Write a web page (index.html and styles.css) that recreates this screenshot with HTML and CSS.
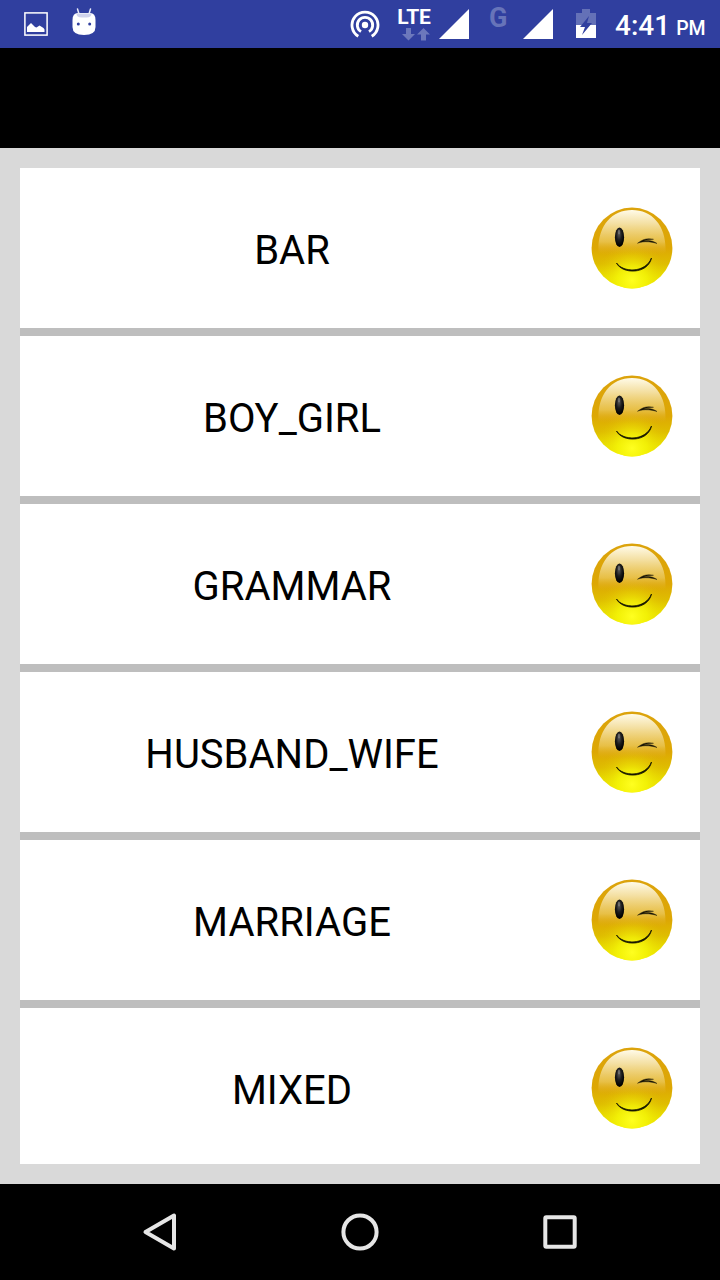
FILE: index.html
```
<!DOCTYPE html>
<html lang="en">
<head>
<meta charset="utf-8">
<title>Categories</title>
<link rel="stylesheet" href="styles.css">
</head>
<body>
<svg class="defs" width="0" height="0" aria-hidden="true">
  <defs>
    <linearGradient id="rim" x1="0" y1="0" x2="0" y2="1">
      <stop offset="0" stop-color="#dca30c"/><stop offset=".5" stop-color="#dda704"/><stop offset=".7" stop-color="#dfbe00"/><stop offset=".87" stop-color="#ebe600"/><stop offset="1" stop-color="#f4ec00"/>
    </linearGradient>
    <radialGradient id="glow" cx=".5" cy=".9" r=".46">
      <stop offset="0" stop-color="#ffff20"/><stop offset=".4" stop-color="#f4f408" stop-opacity=".75"/><stop offset="1" stop-color="#e0c000" stop-opacity="0"/>
    </radialGradient>
    <linearGradient id="shine" x1="0" y1="0" x2="0" y2="1">
      <stop offset="0" stop-color="#fffbe9"/><stop offset=".3" stop-color="#f6e5b0" stop-opacity=".92"/><stop offset=".7" stop-color="#ecca62" stop-opacity=".7"/><stop offset="1" stop-color="#dfab10" stop-opacity="0"/>
    </linearGradient>
    <radialGradient id="eye" cx=".45" cy=".35" r=".6">
      <stop offset="0" stop-color="#555"/><stop offset=".5" stop-color="#1c1c1c"/><stop offset="1" stop-color="#000"/>
    </radialGradient>
    <symbol id="wink" viewBox="0 0 82 82">
      <circle cx="41" cy="41" r="40.4" fill="url(#rim)"/>
      <circle cx="41" cy="41" r="40.4" fill="url(#glow)"/>
      <path d="M7.500 46C6 20 20 3 41 3s35 17 33.500 43C66 50 56 48 41 48S16 50 7.500 46Z" fill="url(#shine)"/>
      <ellipse cx="28.500" cy="30.300" rx="4.600" ry="9.800" fill="url(#eye)"/>
      <ellipse cx="28" cy="25" rx="1.200" ry="2.500" fill="#888" opacity=".6"/>
      <path d="M46.500 36.300C52 31.800 57 31 62.500 32.300C58 32.400 55 33 52.800 34.200C57 32.800 62 33.600 66 36.500C60.500 34.700 55 34.500 51.500 35C50 35.100 48 35.600 46.500 36.300Z" fill="#171306" stroke="#171306" stroke-width=".4"/>
      <path d="M25.500 56C32 65.500 54 66.500 60.500 51C57 67.500 31 67.500 25.500 56Z" fill="#151500" stroke="#151500" stroke-width=".8" stroke-linejoin="round"/>
    </symbol>
  </defs>
</svg>
<div class="screen">
  <header class="status">
    <svg class="picture" width="24" height="24" viewBox="0 0 24 24"><rect x=".9" y=".9" width="22.200" height="22.200" fill="none" stroke="#fff" stroke-width="1.500"/><path d="M3 20v-5l2-2 2-2 4 4 1.500.5 3-2 4 2.500 1 1.500v2.500z" fill="#fff"/></svg>
    <svg class="droid" width="24" height="28" viewBox="0 0 24 28"><path d="M5.500 1l1.500 5M18.500 1l-1.500 5" stroke="#e9ebfa" stroke-width="1.500" stroke-linecap="round"/><path d="M.5 12Q.5 5 6 5H18Q23.500 5 23.500 12V19Q23.500 27 12 27T.5 19Z" fill="#fff"/><path d="M4.500 5.500h15q0 4-5 4h-5q-5 0-5-4z" fill="#d0d3ec"/><circle cx="6.300" cy="16" r="1.500" fill="#303f9f"/><circle cx="17.700" cy="16" r="1.500" fill="#303f9f"/></svg>
    <svg class="hotspot" width="30" height="30" viewBox="0 0 30 30" fill="none" stroke="#fff" stroke-width="2.800"><path d="M8.300 26.200A13 13 0 1 1 21.700 26.200"/><path d="M11 21.600A7.700 7.700 0 1 1 19 21.600"/><circle cx="15" cy="15" r="3.200" fill="#fff" stroke="none"/></svg>
    <div class="lte">
      <span class="lte-text">LTE</span>
      <svg class="arrows" width="30" height="13" viewBox="0 0 30 13"><path d="M5 0h5v6h4l-6.500 6.500-6.500-6.500h4zM20 12.500h5v-6h4L22.500 0 16 6.500h4z" fill="#6c78bc"/></svg>
    </div>
    <svg class="signal-a" width="30" height="30"><path d="M30 0V30H0Z" fill="#fff"/></svg>
    <span class="network">G</span>
    <svg class="signal-b" width="30" height="30"><path d="M30 0V30H0Z" fill="#fff"/></svg>
    <svg class="battery" width="20" height="30" viewBox="0 0 20 30"><path d="M0 4h6V0h8v4h6v12H0z" fill="#6471b7"/><path d="M0 16h20v13H0z" fill="#fff"/><path d="M13 7L4 18h5l-3 8 10-12h-5z" fill="#303f9f"/></svg>
    <span class="time">4:41<span class="period">PM</span></span>
  </header>
  <div class="banner"></div>
  <main class="content">
    <ul class="list">
      <li class="row"><span class="label">BAR</span><span class="thumb"><svg width="82" height="82"><use href="#wink"/></svg></span></li>
      <li class="row"><span class="label">BOY_GIRL</span><span class="thumb"><svg width="82" height="82"><use href="#wink"/></svg></span></li>
      <li class="row"><span class="label">GRAMMAR</span><span class="thumb"><svg width="82" height="82"><use href="#wink"/></svg></span></li>
      <li class="row"><span class="label">HUSBAND_WIFE</span><span class="thumb"><svg width="82" height="82"><use href="#wink"/></svg></span></li>
      <li class="row"><span class="label">MARRIAGE</span><span class="thumb"><svg width="82" height="82"><use href="#wink"/></svg></span></li>
      <li class="row"><span class="label">MIXED</span><span class="thumb"><svg width="82" height="82"><use href="#wink"/></svg></span></li>
    </ul>
  </main>
  <nav class="navbar">
    <svg width="40" height="40" viewBox="0 0 40 40"><path d="M34 3.500V36.500L5.500 20Z"/></svg>
    <svg width="40" height="40" viewBox="0 0 40 40"><circle cx="20" cy="20" r="16.600"/></svg>
    <svg width="40" height="40" viewBox="0 0 40 40"><rect x="5.300" y="5.300" width="29.400" height="29.400" rx="1"/></svg>
  </nav>
</div>
</body>
</html>
```
FILE: styles.css
```
body {
  margin: 0;
  font-family: Roboto, "Liberation Sans", sans-serif;
}

.defs {
  display: block;
}

.screen {
  display: flex;
  flex-direction: column;
  width: 720px;
  height: 1280px;
  overflow: hidden;
  background: #000;
}

.status {
  display: flex;
  align-items: flex-start;
  flex: none;
  box-sizing: border-box;
  height: 48px;
  padding-left: 24px;
  background: #303f9f;
  color: #fff;
}

.status svg {
  flex: none;
}

.picture {
  margin-top: 12px;
}

.droid {
  margin: 8px 0 0 24px;
}

.hotspot {
  margin: 10px 0 0 254px;
}

.lte {
  display: flex;
  flex-direction: column;
  align-items: center;
  width: 38px;
  margin: 5px 0 0 15px;
}

.lte-text {
  font-size: 21px;
  font-weight: 700;
  line-height: 25px;
  letter-spacing: -0.2px;
}

.arrows {
  margin: -2px 0 0 4px;
}

.signal-a {
  margin: 9px 0 0 6px;
}

.network {
  width: 18px;
  margin: 2px 0 0 20px;
  font-size: 27px;
  font-weight: 700;
  line-height: 32px;
  color: #6774b9;
}

.signal-b {
  margin: 9px 0 0 16px;
}

.battery {
  margin: 9px 0 0 23px;
}

.time {
  margin-left: 19px;
  font-size: 28px;
  font-weight: 500;
  line-height: 51px;
  white-space: nowrap;
}

.period {
  margin-left: 6px;
  font-size: 19.5px;
}

.banner {
  flex: none;
  height: 100px;
}

.content {
  flex: none;
  box-sizing: border-box;
  height: 1036px;
  padding: 20px;
  background: #d9d9d9;
}

.list {
  display: flex;
  flex-direction: column;
  gap: 8px;
  height: 996px;
  margin: 0;
  padding: 0;
  overflow: hidden;
  list-style: none;
  background: #bebebe;
}

.row {
  display: flex;
  flex: none;
  align-items: center;
  height: 160px;
  background: #fff;
}

.label {
  flex: 4;
  padding-top: 4px;
  font-size: 40px;
  text-align: center;
  color: #000;
}

.thumb {
  display: flex;
  flex: 1;
  justify-content: center;
}

.navbar {
  display: flex;
  flex: none;
  align-items: center;
  justify-content: center;
  gap: 160px;
  height: 96px;
}

.navbar svg {
  fill: none;
  stroke: #e6e6e6;
  stroke-width: 4;
  stroke-linejoin: round;
}
```
